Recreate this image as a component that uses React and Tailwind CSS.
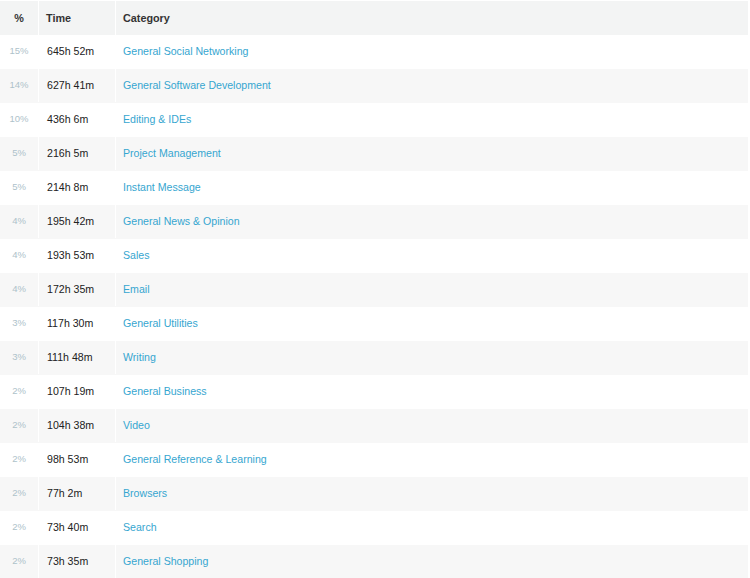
import React from "react";

const rows = [
  ["15%", "645h 52m", "General Social Networking"],
  ["14%", "627h 41m", "General Software Development"],
  ["10%", "436h 6m", "Editing & IDEs"],
  ["5%", "216h 5m", "Project Management"],
  ["5%", "214h 8m", "Instant Message"],
  ["4%", "195h 42m", "General News & Opinion"],
  ["4%", "193h 53m", "Sales"],
  ["4%", "172h 35m", "Email"],
  ["3%", "117h 30m", "General Utilities"],
  ["3%", "111h 48m", "Writing"],
  ["2%", "107h 19m", "General Business"],
  ["2%", "104h 38m", "Video"],
  ["2%", "98h 53m", "General Reference & Learning"],
  ["2%", "77h 2m", "Browsers"],
  ["2%", "73h 40m", "Search"],
  ["2%", "73h 35m", "General Shopping"],
];

export default function App() {
  return (
    <div
      className="w-[750px] h-[578px] overflow-hidden bg-white pt-px pr-[2px]"
      style={{ fontFamily: '"Liberation Sans", Arial, sans-serif' }}
    >
      <div className="flex h-[34px] bg-[#f3f4f4] text-[10.8px] font-bold text-[#333]">
        <div className="w-[39px] flex items-center justify-center border-r border-white">%</div>
        <div className="w-[77px] flex items-center pl-[7px] border-r border-white">Time</div>
        <div className="flex-1 flex items-center pl-[7px]">Category</div>
      </div>
      {rows.map(([p, t, c], i) => (
        <div
          key={i}
          className={`flex h-[34px] pb-px ${i % 2 === 1 ? "bg-[#f7f7f7]" : "bg-white"}`}
        >
          <div className="w-[39px] flex items-center justify-center border-r border-white text-[9.5px] text-[#aec2ca]">
            {p}
          </div>
          <div className="w-[77px] flex items-center pl-[8px] border-r border-white text-[10.6px] text-[#222]">
            {t}
          </div>
          <div className="flex-1 flex items-center pl-[7px] text-[10.6px] text-[#36a6d0]">
            {c}
          </div>
        </div>
      ))}
    </div>
  );
}
